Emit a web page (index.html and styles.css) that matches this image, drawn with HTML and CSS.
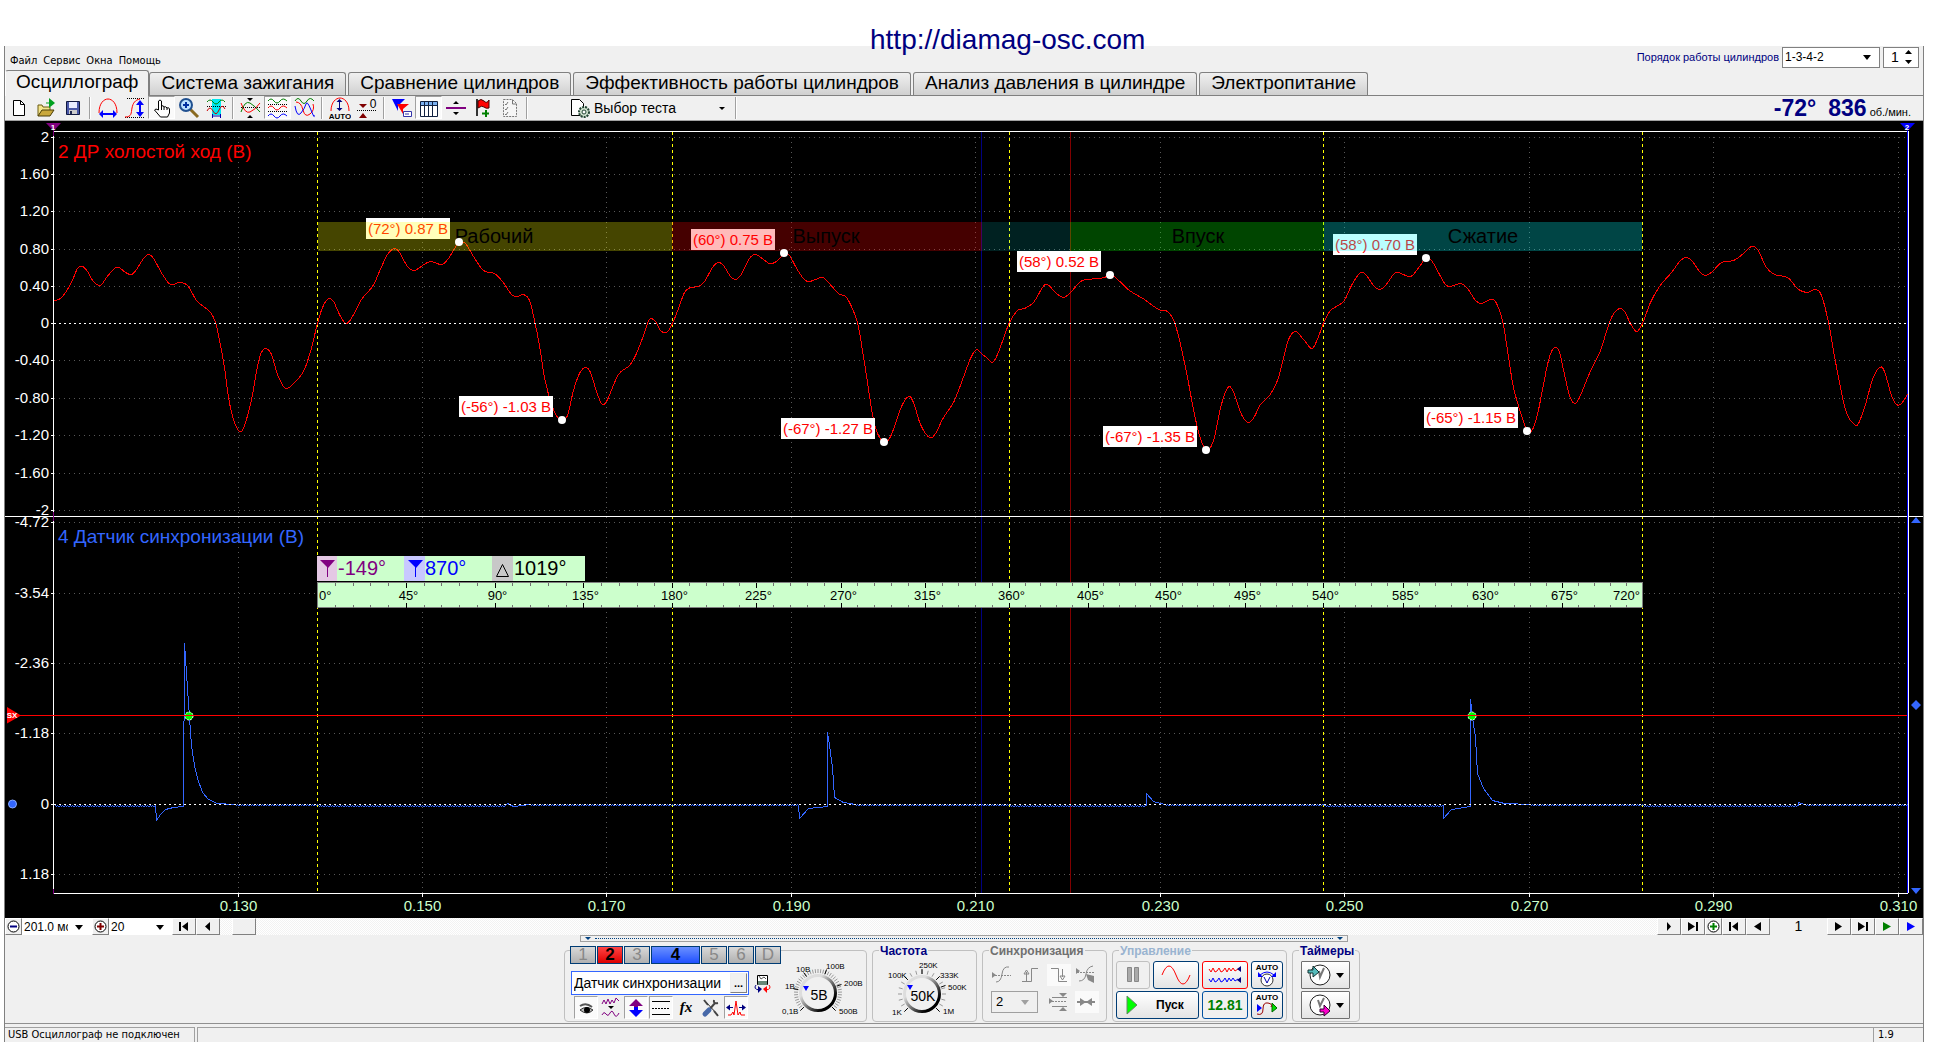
FILE: index.html
```html
<!DOCTYPE html>
<html lang="ru">
<head>
<meta charset="utf-8">
<title>Осциллограф</title>
<link rel="stylesheet" href="styles.css">
</head>
<body>
<a class="site" href="http://diamag-osc.com">http://diamag-osc.com</a>
<main class="app">
  <header class="menubar">
    <nav class="menus">
      <button>Файл</button><button>Сервис</button><button>Окна</button><button>Помощь</button>
    </nav>
    <div class="order">
      <label for="order">Порядок работы цилиндров</label>
      <span class="combo combo-order"><select id="order"><option>1-3-4-2</option></select></span>
      <span class="spin"><input type="text" value="1" aria-label="Цилиндр"><svg width="9" height="16"><path d="M1 5h7L4.500 1zM1 11h7l-3.500 4z"/></svg></span>
    </div>
  </header>

  <nav class="tabs">
    <button class="tab active">Осциллограф</button>
    <button class="tab">Система зажигания</button>
    <button class="tab">Сравнение цилиндров</button>
    <button class="tab">Эффективность работы цилиндров</button>
    <button class="tab">Анализ давления в цилиндре</button>
    <button class="tab">Электропитание</button>
  </nav>

  <div class="toolbar">
    <button class="tool" aria-label="Новый"><svg viewBox="0 0 22 22"><path d="M5.500 3.500h7l4 4v11h-11z" fill="#fff" stroke="#000"/><path d="M12.500 3.500v4h4" fill="none" stroke="#000"/></svg></button>
    <button class="tool" aria-label="Открыть"><svg viewBox="0 0 22 22"><path d="M3 19V8h4l1 2h7v3" fill="#f4e58c" stroke="#6b5a10"/><path d="M3 19l4-6h12l-4 6z" fill="#c9a83c" stroke="#4a3e08"/><path d="M14 1l6 5-6 5z" fill="#00a020"/><path d="M11 6h3" stroke="#00a020"/></svg></button>
    <button class="tool" aria-label="Сохранить"><svg viewBox="0 0 22 22"><path d="M4.500 4.500h13v13h-13z" fill="#4a58a8" stroke="#101840"/><path d="M7 5h8v6H7z" fill="#e8ecff"/><path d="M7 13h8v4H7z" fill="#ccc"/><path d="M8 14h2v3H8z" fill="#202850"/></svg></button>
    <i class="sep"></i>
    <button class="tool" aria-label="Период"><svg viewBox="0 0 22 22"><path d="M2 16C2 6 7 2 11 2s9 4 9 14" fill="none" stroke="red"/><path d="M4 17h14" stroke="#00f" stroke-width="2"/><path d="M2 17l4-4v8zM20 17l-4-4v8z" fill="#00f"/></svg></button>
    <button class="tool" aria-label="Амплитуда"><svg viewBox="0 0 22 22"><path d="M3 1.500h18M1 20.500h19" stroke="#000" stroke-dasharray="1 1"/><path d="M1 20c7 0 6-4 7-9s3-8 8-9" fill="none" stroke="red"/><path d="M16 6v11" stroke="#00f" stroke-width="2"/><path d="M16 3l4 5h-8zM16 20l4-5h-8z" fill="#00f"/></svg></button>
    <button class="tool on" aria-label="Рука"><svg viewBox="0 0 22 22"><path d="M7.500 13V4q1.500-2 3 0v5q2-1 2.500 1 2-1 3 1 2-1 2.500 1v4l-2 4h-7l-6-7q1-2 4 0zM10.500 9v4M13 10v3M16 11v2" fill="#fff" stroke="#000"/></svg></button>
    <button class="tool" aria-label="Масштаб"><svg viewBox="0 0 22 22"><path d="M12 12l8 8" stroke="#8a6a20" stroke-width="3"/><circle cx="8" cy="8" r="6" fill="#b8e0ff" stroke="#205090" stroke-width="2"/><path d="M5 8h6M8 5v6" stroke="#0030a0" stroke-width="2"/></svg></button>
    <button class="tool" aria-label="Окно"><svg viewBox="0 0 22 22"><path d="M7 2h9v16H7z" fill="#00e8f0"/><path d="M2 5q3-4 6 0t6 0 6 0" fill="none" stroke="green"/><path d="M2 9.500h19" stroke="#000" stroke-dasharray="1 1"/><path d="M2 14q3-6 6 0t6-1 6-1" fill="none" stroke="#c00"/><path d="M7 19h9M7.500 17v4M15.500 17v4" stroke="#00a"/></svg></button>
    <i class="sep"></i>
    <button class="tool" aria-label="Совместить"><svg viewBox="0 0 22 22"><path d="M1 15q4-12 9-9t10 9" fill="none" stroke="green"/><path d="M1 6q4 11 9 9t10-9" fill="none" stroke="red"/><path d="M1 10.500h20" stroke="#000" stroke-dasharray="1 1"/><path d="M7 1h6l-3 3zM7 21h6l-3-3z"/></svg></button>
    <button class="tool on" aria-label="Раздельно"><svg viewBox="0 0 22 22"><path d="M1 4q3-4 6 0t6 0 7 0" fill="none" stroke="green"/><path d="M1 11q3-4 6 0t6 0 7 0" fill="none" stroke="red"/><path d="M1 19q3-4 6 0t6 0 7 0" fill="none" stroke="#00f"/><path d="M1 7.500h20M1 14.500h20" stroke="#000" stroke-dasharray="1 1"/></svg></button>
    <button class="tool" aria-label="Наложить"><svg viewBox="0 0 22 22"><path d="M1 4q3-5 6 0t6 0 7 0" fill="none" stroke="green"/><path d="M2 5q5 0 7 8t7 4 3-10" fill="none" stroke="red"/><path d="M1 9q2 12 6 7t5-9 5 6 3 5" fill="none" stroke="#00f"/></svg></button>
    <i class="sep"></i>
    <button class="tool" aria-label="Авто"><svg viewBox="0 0 22 22"><path d="M2 14C2 5 7 1 11 1s9 4 9 13" fill="none" stroke="red"/><path d="M10.500 4v8" stroke="#000080"/><path d="M10.500 2l3 3h-6zM10.500 14l3-3h-6z" fill="#000080"/><text class="auto" x="11" y="22">AUTO</text></svg></button>
    <button class="tool" aria-label="Ноль"><svg viewBox="0 0 22 22"><path d="M3 7h8l-4 4zM3 21h8l-4-5z" fill="#800000"/><path d="M1 13.500h20" stroke="#000" stroke-dasharray="1 1"/><text class="zero" x="17" y="11">0</text></svg></button>
    <i class="sep"></i>
    <button class="tool" aria-label="Маркеры"><svg viewBox="0 0 22 22"><path d="M1 2h13L7 9v5z" fill="#00f"/><path d="M6 7h12l-6 5v5z" fill="red"/><path d="M12.500 14.500h8v5h-8z" fill="#fff" stroke="#33a"/><path d="M14 17h4" stroke="#33a"/></svg></button>
    <button class="tool on" aria-label="Таблица"><svg viewBox="0 0 22 22"><path d="M2.500 4.500h17v15h-17z" fill="#fff"/><path d="M3 5h16v4H3z" fill="#7ab0f0"/><path d="M2.500 4.500h17v15h-17zM2 8.500h18M6.500 4v15M10.500 4v15M14.500 4v15" stroke="#102040" fill="none"/></svg></button>
    <button class="tool" aria-label="Сечение"><svg viewBox="0 0 22 22"><path d="M1 11h20" stroke="#800080" stroke-width="2"/><path d="M8 7h6l-3-3zM8 15h6l-3 3z"/></svg></button>
    <button class="tool" aria-label="Флаг"><svg viewBox="0 0 22 22"><path d="M5 2v17" stroke="#333" stroke-width="2"/><path d="M6 4q3-3 6 0t5-1v8q-3 1-5-1t-6 1z" fill="red" stroke="#400"/><path d="M14 13v7M10 16.500h7" stroke="green" stroke-width="2"/></svg></button>
    <button class="tool" aria-label="Отчёт"><svg viewBox="0 0 22 22"><path d="M4.500 2.500h9l4 4v13h-13z" fill="#f6f6f6" stroke="#777" stroke-dasharray="2 1"/><path d="M13.500 3v4h4" fill="none" stroke="#777"/><path d="M6 7l1 1 2-3M6 12l1 1 2-3M6 17l1 1 2-3" fill="none" stroke="#777"/></svg></button>
    <i class="sep"></i>
    <button class="test"><svg width="20" height="20" viewBox="0 0 20 20"><path d="M1.500 1.500h8l4 4v12h-12z" fill="#fff" stroke="#000"/><circle cx="14" cy="14" r="5" fill="#cde0cd" stroke="#243" stroke-width="2" stroke-dasharray="2 1"/><circle cx="14" cy="14" r="2" fill="#fff" stroke="#243"/></svg><span>Выбор теста</span><svg class="arrow" width="6" height="4"><path d="M0 0h6L3 3z"/></svg></button>
    <i class="sep"></i>
    <output class="rpm"><b>-72°</b><b>836</b><span>об./мин.</span></output>
  </div>

  <svg class="scope" id="scope" viewBox="5 121 1918 797" role="img" aria-label="Осциллограмма"></svg>

  <div class="strip">
    <button class="cell narrow" aria-label="Уменьшить"><svg width="15" height="15"><circle cx="7.500" cy="7.500" r="5.500" fill="#fff" stroke="#000"/><path d="M4 7.500h7" stroke="#000080" stroke-width="2"/></svg></button>
    <span class="combo combo-time"><select aria-label="Развёртка"><option>201.0 мс</option></select></span>
    <button class="cell narrow" aria-label="Увеличить"><svg width="15" height="15"><circle cx="7.500" cy="7.500" r="5.500" fill="#fff" stroke="#000"/><path d="M4 7.500h7M7.500 4v7" stroke="#800000" stroke-width="2"/></svg></button>
    <span class="combo combo-step"><select aria-label="Шаг"><option>20</option></select></span>
    <button class="cell" aria-label="В начало"><svg width="12" height="9"><path d="M1 0h2v9H1zM10 0v9L4 4.500z"/></svg></button>
    <button class="cell" aria-label="Назад"><svg width="12" height="9"><path d="M8 0v9L3 4.500z"/></svg></button>
    <div class="track"><button class="cell thumb" aria-label="Положение"></button></div>
    <button class="cell" aria-label="Вперёд"><svg width="12" height="9"><path d="M4 0v9l4-4.500z"/></svg></button>
    <button class="cell" aria-label="В конец"><svg width="12" height="9"><path d="M9 0h2v9H9zM1 0v9l7-4.500z"/></svg></button>
    <button class="cell narrow" aria-label="Добавить"><svg width="15" height="15"><circle cx="7.500" cy="7.500" r="5.500" fill="#fff" stroke="#000"/><path d="M4 7.500h7M7.500 4v7" stroke="green" stroke-width="2"/></svg></button>
    <button class="cell" aria-label="Первый кадр"><svg width="12" height="9"><path d="M1 0h2v9H1zM10 0v9L4 4.500z"/></svg></button>
    <button class="cell" aria-label="Предыдущий кадр"><svg width="12" height="9"><path d="M9 0v9L2 4.500z"/></svg></button>
    <output class="frame">1</output>
    <button class="cell" aria-label="Следующий кадр"><svg width="12" height="9"><path d="M2 0v9l7-4.500z"/></svg></button>
    <button class="cell" aria-label="Последний кадр"><svg width="12" height="9"><path d="M9 0h2v9H9zM1 0v9l7-4.500z"/></svg></button>
    <button class="cell" aria-label="Воспроизвести"><svg width="12" height="9"><path d="M2 0v9l8-4.500z" fill="green"/></svg></button>
    <button class="cell" aria-label="Повторять"><svg width="12" height="9"><path d="M2 0v9l8-4.500z" fill="#00f"/></svg></button>
  </div>

  <div class="splitter"><i class="tri"></i><i class="dots"></i><i class="tri"></i></div>

  <div class="panels">
    <section class="group g-channel">
      <div class="chan-main">
        <div class="channels">
          <button>1</button><button class="red">2</button><button>3</button><button class="blue">4</button><button>5</button><button>6</button><button>D</button>
        </div>
        <div class="chan-name">
          <div class="namebox"><input type="text" value="Датчик синхронизации" aria-label="Имя канала"><button aria-label="Выбрать">...</button></div>
          <button class="plain" aria-label="Инверсия"><svg width="19" height="19" viewBox="0 0 19 19"><path d="M4.500 1.500h10v9h-10z" fill="#fff" stroke="#000"/><path d="M5 7h9v4H5z" fill="#687"/><path d="M6 2l2 3 3-2 2 2" fill="none" stroke="#555"/><path d="M3 11q-3 4 3 5" fill="none" stroke="#000080"/><path d="M5 12l4 3-4 4z" fill="#000080"/><path d="M16 11q3 4-3 5" fill="none" stroke="red"/><path d="M14 12l-4 3 4 4z" fill="red"/></svg></button>
        </div>
        <div class="chan-tools">
          <button class="tool on" aria-label="Видимость"><svg viewBox="0 0 22 22"><path d="M5 9q6-4 12 1" fill="none" stroke="#555" stroke-width="2"/><path d="M5 13q6-5 13 0-6 6-13 0" fill="#bbb" stroke="#333"/><circle cx="12" cy="13" r="3"/></svg></button>
          <button class="tool" aria-label="Фильтр"><svg viewBox="0 0 22 22"><path d="M2 7l2-4 2 4 2-5 2 5 2-4 2 3 2-5 3 3" fill="none" stroke="#800080"/><path d="M8 9h6l-3 3z"/><path d="M2 18q2-4 4-1t4-1 4 1 5-1" fill="none" stroke="#800080"/></svg></button>
          <button class="tool on" aria-label="Смещение"><svg viewBox="0 0 22 22"><path d="M11 2l7 7h-5v3H9V9H4z" fill="#800080"/><path d="M11 20l7-7h-5v-3H9v3H4z" fill="#00f"/></svg></button>
          <button class="tool on" aria-label="Линии"><svg viewBox="0 0 22 22"><path d="M2 4.500h18M2 17.500h18" stroke="#000"/><path d="M2 11.500h18" stroke="#000" stroke-dasharray="2 1"/></svg></button>
          <button class="tool" aria-label="Функция"><span class="fx">fx</span></button>
          <button class="tool" aria-label="Настройки"><svg viewBox="0 0 22 22"><path d="M5 4l13 14" stroke="#222"/><path d="M4 3l4 5M14 14l4 5" stroke="#444" stroke-width="2"/><path d="M14 3q-1 4 4 3M15 6l-6 7" fill="none" stroke="#444" stroke-width="2"/><path d="M9 13l-4 4" stroke="#4668a8" stroke-width="5" stroke-linecap="round"/></svg></button>
          <button class="tool on" aria-label="Импульс"><svg viewBox="0 0 22 22"><path d="M3 18h3l2-3 1 3 2-14 2 14 2-3 1 3h4" fill="none" stroke="red"/><path d="M3 10.500h5M14 10.500h5" stroke="#000080"/><path d="M1 10.500l4-3v6zM21 10.500l-4-3v6z" fill="#000080"/></svg></button>
        </div>
      </div>
      <svg class="knob" id="knob-volt" width="85" height="68" viewBox="780 952 85 68"></svg>
    </section>

    <section class="group g-freq">
      <h2>Частота</h2>
      <svg class="knob" id="knob-freq" width="97" height="60" viewBox="876 959 97 60"></svg>
    </section>

    <section class="group g-sync">
      <h2>Синхронизация</h2>
      <div class="sync-grid">
        <button class="plain" disabled aria-label="Уровень"><svg width="22" height="22"><path d="M1 8v6l4-3z" fill="#888"/><path d="M1 11.500h19" stroke="#888" stroke-dasharray="2 1"/><path d="M5 18q5 0 6-8t7-7" fill="none" stroke="#888"/></svg></button>
        <button class="plain" disabled aria-label="Фронт"><svg width="22" height="22"><path d="M3 17.500h9.500v-13H19M7.500 8v9M5 10l2.500-4 2.500 4z" fill="none" stroke="#888"/></svg></button>
        <button class="plain hatch" disabled aria-label="Спад"><svg width="22" height="22"><path d="M4 4.500h7.500v13H20M15.500 5v8M13 12l2.500 4 2.500-4z" fill="none" stroke="#888"/></svg></button>
        <button class="plain" disabled aria-label="Ручная"><svg width="22" height="22"><path d="M1 4v6l4-3z" fill="#888"/><path d="M2 8.500h18" stroke="#888" stroke-dasharray="2 1"/><path d="M4 17q6 0 7-7t7-8" fill="none" stroke="#888"/><path d="M11 10l8 2v7l-6-3z" fill="#888"/></svg></button>
        <span class="combo combo-sync"><select disabled aria-label="Канал синхронизации"><option>2</option></select></span>
        <button class="plain" disabled aria-label="Диапазон"><svg width="22" height="22"><path d="M2 7v6l4-3z" fill="#888"/><path d="M5 6.500h15M5 15.500h15" stroke="#888"/><path d="M5 10.500h15" stroke="#888" stroke-dasharray="2 1"/><path d="M12 2h8l-4 4zM12 20h8l-4-4z" fill="#888"/></svg></button>
        <button class="plain hatch" disabled aria-label="Центр"><svg width="22" height="22"><path d="M2 11h18" stroke="#888" stroke-width="2"/><path d="M5 7l6 4-6 4zM17 7l-6 4 6 4z" fill="#888"/></svg></button>
      </div>
    </section>

    <section class="group g-control">
      <h2>Управление</h2>
      <div class="ctrl-grid">
        <button class="key off" disabled aria-label="Пауза"><svg width="14" height="16"><path d="M1.500.5h4v14h-4zM8.500.5h4v14h-4z" fill="#aaa" stroke="#888"/></svg></button>
        <button class="key" aria-label="Синус"><svg width="30" height="20"><path d="M1 10Q8-8 15 10t14 0" fill="none" stroke="red"/></svg></button>
        <button class="key hot" aria-label="Сигналы"><svg width="34" height="20"><path d="M1 4l2 3 2-4 2 4 2-1 2-3 2 4 2-1 2-3 2 4 2-4 2 3 2-3 2 3 3-2" fill="none" stroke="red"/><path d="M1 14l2 3 2-4 2 4 2-1 2-3 2 4 2-1 2-3 2 4 2-4 2 3 2-3 2 3 3-2" fill="none" stroke="#00f"/><path d="M33 1v6l-4-3zM33 12v6l-4-3z" fill="#000080"/></svg></button>
        <button class="key" aria-label="Авто диапазон"><svg width="24" height="24"><text class="auto" x="12" y="7">AUTO</text><circle cx="12" cy="17" r="6" fill="#fff" stroke="#333"/><path d="M5 12q7-6 14 0" fill="none" stroke="#00f"/><path d="M3 9v5h5zM21 9v5h-5z" fill="#00f"/><path d="M9 14l3 6 3-6" fill="none" stroke="#00a"/></svg></button>
        <button class="key start"><svg width="12" height="20"><path d="M1 1l10 9-10 9z" fill="#0f0" stroke="#686" /></svg><span>Пуск</span></button>
        <output class="key volt">12.81</output>
        <button class="key" aria-label="Авто пуск"><svg width="24" height="24"><text class="auto" x="12" y="7">AUTO</text><path d="M2 11v8l5-4z" fill="#00f"/><path d="M17 10v9l5-4z" fill="#0d0" stroke="#060"/><path d="M2 21q6 2 6-5t5-6 3 4" fill="none" stroke="#900"/></svg></button>
      </div>
    </section>

    <section class="group g-timer">
      <h2>Таймеры</h2>
      <button class="key clock" aria-label="Таймер начала"><svg width="26" height="24" viewBox="0 0 26 24"><circle cx="14" cy="12" r="10" fill="#fff" stroke="#222"/><path d="M18 5l-4 9-1-6" fill="none" stroke="#777" stroke-width="2"/><path d="M2 7h5V3l6 6-6 5v-4H2z" fill="#5bb" stroke="#133"/></svg><svg class="arrow" width="8" height="5"><path d="M0 0h8L4 5z"/></svg></button>
      <button class="key clock" aria-label="Таймер окончания"><svg width="26" height="24" viewBox="0 0 26 24"><circle cx="14" cy="12" r="10" fill="#fff" stroke="#222"/><path d="M18 5l-4 8-2-6" fill="none" stroke="#777" stroke-width="2"/><path d="M14 16h4v-4l6 6-6 5v-4h-4z" fill="#f0c" stroke="#303"/></svg><svg class="arrow" width="8" height="5"><path d="M0 0h8L4 5z"/></svg></button>
    </section>
  </div>

  <footer class="status"><span class="usb">USB Осциллограф не подключен</span><span class="blank"></span><span class="version">1.9</span></footer>
</main>
<script src="scope.js"></script>
</body>
</html>
```
FILE: styles.css
```css
* { box-sizing: border-box; }
body { margin: 0; background: #fff; color: #000; font: 11px/14px "Liberation Sans", Arial, sans-serif; }
button, input, select, output { font: inherit; color: inherit; }
button { padding: 0; border: 0; background: none; }
svg { display: block; flex: none; }

.site { position: absolute; top: 24px; left: 870px; color: #000080; font-size: 28px; line-height: 32px; text-decoration: none; }
.app { margin: 46px 16px 5px 4px; background: #f0f0f0; border: solid #808080; border-width: 0 1px; }

.menubar { display: flex; justify-content: space-between; height: 24px; padding: 0 4px 0 5px; }
.menus { display: flex; align-items: center; gap: 6px; padding-top: 6px; font-family: "DejaVu Sans Condensed", "Liberation Sans", sans-serif; font-size: 11px; }
.order { display: flex; align-items: center; gap: 3px; padding-bottom: 2px; color: #000080; }
.combo { position: relative; display: inline-flex; background: #fff; color: #000; }
.combo::after { content: ""; position: absolute; right: 8px; top: 50%; margin-top: -2px; border: 4px solid transparent; border-top: 5px solid #000; border-bottom: 0; }
.combo select { appearance: none; width: 100%; border: 0; background: none; padding: 0 2px; opacity: 1; }
.combo-order { width: 98px; height: 21px; border: 1px solid #808080; font-size: 12px; }
.spin { display: flex; align-items: center; justify-content: space-between; width: 36px; height: 21px; padding: 0 5px; border: 1px solid #808080; background: #fff; color: #000; font-size: 14px; }
.spin input { width: 12px; border: 0; padding: 0 0 0 2px; background: none; }

.tabs { display: flex; align-items: flex-end; gap: 2px; height: 26px; border-bottom: 1px solid #808080; }
.tab { flex: none; height: 23px; padding: 0 11px 2px; border: 1px solid #808080; border-bottom: 0; border-radius: 3px 3px 0 0; background: linear-gradient(#f0f0f0, #d0d0d0); font-size: 19px; line-height: 20px; white-space: nowrap; }
.tab.active { height: 26px; margin: 0 -2px -1px 0; padding: 0 10px 3px; border-left-color: #fff; background: #f0f0f0; }

.toolbar { display: flex; align-items: center; height: 25px; padding: 0 12px 1px 0; border-bottom: 1px solid #a0a0a0; }
.tool { display: flex; flex: none; align-items: center; justify-content: center; width: 27px; height: 23px; }
.tool svg { width: 22px; height: 22px; }
.on { background: #fafafa; border: 1px solid #a0a0a0; border-right-color: #fff; border-bottom-color: #fff; }
.sep { flex: none; width: 2px; height: 22px; margin: 0 3px; border-left: 1px solid #a0a0a0; border-right: 1px solid #fff; }
.auto { font: bold 8px "Liberation Sans", sans-serif; text-anchor: middle; }
.zero { font: 12px "Liberation Sans", sans-serif; text-anchor: middle; }
.test { display: flex; align-items: center; gap: 4px; width: 162px; margin-left: 39px; font-size: 14px; text-align: left; }
.test .arrow { margin: 2px 7px 0 auto; }
.rpm { display: flex; align-items: baseline; margin-left: auto; color: #000080; }
.rpm b { margin-right: 12px; font-size: 23px; line-height: 22px; }
.rpm b + b { margin-right: 3px; }
.rpm span { color: #000; font-size: 11px; }

.scope { width: 100%; height: auto; background: #000; font-family: "Liberation Sans", Arial, sans-serif; }
.crisp { shape-rendering: crispEdges; }
.grid { stroke: #585858; stroke-dasharray: 1 4; }
.zero-line { stroke: #fff; stroke-dasharray: 2 3; }
.cycle { stroke: #ff0; stroke-dasharray: 3 3; }
.axis { stroke: #fff; }
.lab { font-size: 15px; fill: #fff; }
.lab-x { fill: #cfc; text-anchor: middle; }
.end { text-anchor: end; }
.mid { text-anchor: middle; }
.title { font-size: 19px; }
.callout { font-size: 15px; fill: #f00; }
.phase { font-size: 20px; text-anchor: middle; }
.read { font-size: 20px; }
.deg { font-size: 13px; }
.trace { fill: none; stroke: #f00; shape-rendering: crispEdges; }
.trace.sync { stroke: #36f; }
.tiny { font: bold 8px "Liberation Sans", sans-serif; fill: #fff; text-anchor: middle; }

.strip { display: flex; height: 17px; }
.cell { display: flex; flex: none; align-items: center; justify-content: center; width: 24px; height: 17px; border: 1px solid #fff; border-right-color: #808080; border-bottom-color: #808080; background: #f0f0f0; }
.narrow { width: 17px; }
.combo-time { width: 70px; font-size: 12px; overflow: hidden; }
.combo-step { width: 63px; font-size: 12px; }
.combo-time::after { right: 9px; }
.combo-time select { padding-right: 24px; }
.track { flex: 1; padding-left: 12px; background: repeating-conic-gradient(#fff 0 25%, #f2f2f2 0 50%) 0 0 / 2px 2px; }
.frame { width: 57px; font-size: 14px; line-height: 17px; text-align: center; }

.splitter { display: flex; align-items: center; width: 40%; height: 7px; margin: 0 auto; padding: 0 4px; border: 1px solid #a0a0a0; }
.dots { flex: 1; margin: 0 4px; border-top: 1px dotted #004080; }
.tri { border: 3px solid transparent; border-top: 3px solid #004080; border-bottom: 0; }

.panels { display: flex; justify-content: center; gap: 5px; padding: 8px 4px 1px 0; }
.group { height: 72px; border: 1px solid #c0c0c0; border-radius: 4px; }
.group h2 { width: max-content; margin: -7px 0 3px 6px; padding: 0 1px; background: #f0f0f0; color: #000080; font-size: 12px; line-height: 14px; }
.g-channel { display: flex; width: 303px; padding-left: 5px; }
.chan-main { width: 210px; }
.channels { display: flex; gap: 1px; width: 211px; height: 18px; margin: -5px 0 7px; background: #f0f0f0; }
.channels button { width: 26px; border: 1px solid #003c74; background: linear-gradient(#d8d8d8, #b0b0b0); color: #888; font-size: 17px; line-height: 16px; }
.channels .red { background: linear-gradient(#f44, #d00); color: #000; font-weight: bold; }
.channels .blue { width: 49px; background: linear-gradient(#6a90ff, #2050ff); color: #000; font-weight: bold; }
.chan-name { display: flex; align-items: center; gap: 4px; height: 24px; }
.namebox { display: flex; width: 178px; height: 24px; margin-left: 1px; padding: 1px; border: 1px solid #36f; background: #fff; }
.namebox input { flex: 1; min-width: 0; border: 0; padding: 0 1px; background: none; font-size: 14px; }
.namebox button { width: 17px; border: 1px solid #eee; border-right-color: #808080; border-bottom-color: #808080; background: #f0f0f0; font-weight: bold; }
.chan-tools { display: flex; gap: 1px; padding: 1px 0 0 4px; }
.chan-tools .tool { width: 24px; height: 23px; }
.fx { font: italic bold 15px "Liberation Serif", serif; }
.knob { font-family: "Liberation Sans", Arial, sans-serif; }
.knob-label { font-size: 8px; }
.knob-value { font-size: 14px; text-anchor: middle; }
.g-freq { width: 105px; padding: 0 3px; }
.g-freq h2 { margin-bottom: 1px; margin-left: 3px; }
.g-sync { width: 125px; }
.g-sync h2 { color: #707070; }
.sync-grid { display: grid; grid-template-columns: repeat(4, 24px); gap: 5px 4px; padding: 3px 0 0 8px; }
.hatch { background: #fafafa; }
.combo-sync { grid-column: span 2; width: 47px; height: 22px; border: 1px solid #a0a0a0; background: none; font-size: 13px; }
.combo-sync::after { border-top-color: #a0a0a0; }
.combo-sync select { padding-left: 4px; color: #000; }
.g-control { width: 175px; }
.g-control h2 { color: #9ab4d0; }
.ctrl-grid { display: grid; grid-template-columns: 34px 46px 46px 32px; gap: 2px 3px; padding-left: 3px; }
.key { display: flex; align-items: center; justify-content: center; height: 28px; border: 1px solid #003c74; border-radius: 3px; background: linear-gradient(#fff, #e4e4e4); }
.off { border-color: #c0c0c0; background: #f0f0f0; }
.hot { border-color: #f00; }
.start { grid-column: span 2; justify-content: flex-start; gap: 18px; padding-left: 9px; font-size: 12px; font-weight: bold; }
.volt { border-color: #0050a0; background: #f0f0f0; color: green; font-size: 14px; font-weight: bold; }
.g-timer { width: 68px; }
.clock { justify-content: flex-start; gap: 4px; width: 49px; margin: 0 0 2px 8px; padding-left: 4px; border-color: #707070; border-radius: 1px; }

.status { display: flex; height: 19px; padding-top: 3px; border-top: 1px solid #909090; font-family: "DejaVu Sans Condensed", "Liberation Sans", sans-serif; font-size: 11px; line-height: 14px; }
.status span { border-top: 1px solid #a0a0a0; border-right: 1px solid #a0a0a0; }
.usb { width: 190px; padding-left: 3px; white-space: nowrap; }
.status .blank { flex: 1; margin-left: 2px; border-left: 1px solid #a0a0a0; }
.status .version { width: 49px; padding-left: 4px; border-right: 0; }
```
FILE: scope.js
```js
const out = [];
const line = (x1, y1, x2, y2, cls, extra = '') =>
  out.push(`<line class="crisp ${cls}" x1="${x1}" y1="${y1}" x2="${x2}" y2="${y2}" ${extra}/>`);
const text = (x, y, s, cls, fill) =>
  out.push(`<text class="${cls}" x="${x}" y="${y}"${fill ? ` fill="${fill}"` : ''}>${s}</text>`);
const rect = (x, y, w, h, fill, extra = '') =>
  out.push(`<rect class="crisp" x="${x}" y="${y}" width="${w}" height="${h}" fill="${fill}" ${extra}/>`);

// Grid and axes
const upper = [['2', 137], ['1.60', 174], ['1.20', 211], ['0.80', 249], ['0.40', 286], ['0', 323],
  ['-0.40', 360], ['-0.80', 398], ['-1.20', 435], ['-1.60', 473], ['-2', 510]];
const lower = [['-4.72', 522], ['-3.54', 593], ['-2.36', 663], ['-1.18', 733], ['0', 804], ['1.18', 874]];
[...upper, ...lower].forEach(([label, y]) => {
  line(54, y + .5, 1907, y + .5, 'grid');
  line(51, y + .5, 54, y + .5, 'axis');
  text(49, y + 5, label, 'lab end');
});
['0.130', '0.150', '0.170', '0.190', '0.210', '0.230', '0.250', '0.270', '0.290', '0.310'].forEach((label, i) => {
  const x = Math.floor(238 + i * 184.45) + .5;
  line(x, 137, x, 893, 'grid');
  line(x, 893, x, 897, 'axis');
  text(x, 911, label, 'lab lab-x');
});
line(981.5, 132, 981.5, 893, '', 'stroke="#000080"');
line(1070.5, 132, 1070.5, 893, '', 'stroke="#800000"');
const cycles = [317.5, 672.5, 1009.5, 1323.5, 1642.5];
cycles.forEach(x => line(x, 132, x, 893, 'cycle'));
line(53, 131.5, 1908, 131.5, 'axis');
line(5, 516.5, 1923, 516.5, 'axis');
line(53, 893.5, 1908, 893.5, 'axis');
line(53.5, 131, 53.5, 893, 'axis');
line(1908.5, 131, 1908.5, 893, 'axis');
line(1907.5, 131, 1907.5, 893, '', 'stroke="#00f"');
text(58, 158, '2 ДР холостой ход (В)', 'title', '#f00');
text(58, 543, '4 Датчик синхронизации (В)', 'title', '#36f');

// Channel 2 samples: x, y pairs
const ch2 = [54,300,60,298,67,289,74,275,77,268,82,266,87,271,93,281,100,285,106,277,115,267,120,268,125,272,131,274,136,269,143,258,148,254,153,258,162,274,170,284,179,282,187,285,196,300,203,306,210,312,215,322,219,340,224,367,228,397,233,419,239,431,244,425,251,399,256,371,260,354,265,348,271,354,277,374,285,388,294,382,303,371,310,351,317,323,322,307,328,298,333,301,340,316,346,323,352,316,361,299,372,286,379,271,387,254,394,248,399,252,407,266,414,270,422,265,430,261,441,264,448,258,454,248,459,242,465,243,473,256,483,270,494,273,502,281,511,294,517,296,523,294,529,300,534,320,539,345,544,377,551,404,557,417,562,420,567,415,573,390,579,373,585,367,590,372,597,394,602,404,607,399,618,374,629,365,636,353,643,335,649,319,655,321,660,330,666,332,672,323,678,308,684,292,690,287,698,286,704,281,712,267,718,262,723,265,730,276,735,279,740,275,749,258,755,254,763,259,769,263,776,261,784,253,789,255,798,271,807,281,821,277,827,281,838,293,845,296,850,304,857,322,862,350,867,382,872,414,877,433,884,442,889,438,894,426,901,406,908,396,913,402,920,424,929,437,935,433,943,417,953,402,961,382,970,358,976,349,981,353,987,358,992,362,997,354,1004,335,1009,322,1017,310,1024,308,1033,302,1042,287,1047,284,1055,292,1063,297,1071,291,1082,280,1100,278,1110,275,1115,277,1129,290,1144,299,1158,309,1167,311,1174,322,1180,344,1187,377,1193,409,1199,435,1206,450,1213,440,1219,412,1224,394,1229,386,1234,394,1241,414,1248,422,1254,416,1260,404,1269,395,1277,380,1283,358,1288,339,1295,331,1303,339,1311,348,1316,341,1323,323,1330,310,1343,301,1351,285,1360,272,1366,275,1373,285,1379,289,1385,285,1393,274,1398,272,1410,276,1419,266,1425,258,1431,260,1439,274,1445,284,1450,286,1460,283,1467,288,1475,300,1481,303,1490,299,1495,301,1502,320,1507,350,1513,387,1521,415,1527,431,1532,429,1537,414,1543,384,1547,364,1551,351,1555,347,1559,352,1564,374,1569,395,1574,403,1579,397,1589,373,1600,350,1606,331,1612,315,1619,308,1624,311,1630,323,1636,331,1642,323,1650,302,1659,286,1671,272,1680,260,1686,257,1692,261,1699,271,1705,275,1712,271,1721,262,1733,260,1743,253,1751,246,1757,249,1766,267,1774,274,1787,277,1797,288,1806,292,1815,289,1821,295,1828,322,1834,356,1842,397,1847,415,1854,424,1858,423,1865,404,1872,379,1879,367,1884,371,1891,395,1896,404,1901,403,1907,394];
const pts = [];
for (let i = 0; i < ch2.length; i += 2) pts.push([ch2[i] + .5, ch2[i + 1] + .5]);
let d = `M${pts[0]}`;
for (let i = 0; i < pts.length - 1; i++) {
  const a = pts[Math.max(i - 1, 0)], b = pts[i], c = pts[i + 1], e = pts[Math.min(i + 2, pts.length - 1)];
  d += `C${b[0] + (c[0] - a[0]) / 6},${b[1] + (c[1] - a[1]) / 6} ${c[0] - (e[0] - b[0]) / 6},${c[1] - (e[1] - b[1]) / 6} ${c}`;
}
out.push(`<path class="trace" d="${d}"/>`);
line(54, 323.5, 1907, 323.5, 'zero-line');

// Channel 4: quiet, slightly noisy baseline with synchronisation pulses
const ch4 = [54,805,155,805,156,820,160,814,165,809,173,807,183,806,184,643,187,688,189,717,191,745,194,765,197,778,202,792,208,799,217,803,234,804,317,804,318,805,505,805,507,803,513,806,530,804,672,804,798,805,799,818,808,808,827,806,827,732,829,745,832,767,834,797,843,802,855,804,1009,804,1010,805,1146,805,1146,793,1153,801,1164,804,1323,804,1324,805,1443,805,1443,818,1451,809,1470,806,1470,699,1472,717,1475,737,1477,773,1483,788,1492,800,1504,803,1530,804,1642,804,1643,805,1798,805,1798,802,1804,804,1907,804];
const pulse = [];
for (let i = 0; i < ch4.length; i += 2) {
  pulse.push(`${ch4[i] + .5},${ch4[i + 1] + .5}`);
  if (ch4[i + 2] - ch4[i] > 30) {
    for (let x = ch4[i] + 1; x < ch4[i + 2]; x++) pulse.push(`${x + .5},${ch4[i + 1] + .5 + (x * x * 7 + x) % 5 % 2}`);
  }
}
out.push(`<polyline class="trace sync" points="${pulse.join(' ')}"/>`);
line(54, 804.5, 1907, 804.5, 'zero-line');

// Trigger level
[189, 1472].forEach(x => out.push(`<circle cx="${x}" cy="716" r="4" fill="#0f0" stroke="#fff" stroke-dasharray="2 1"/>`));
line(8, 715.5, 1907, 715.5, '', 'stroke="#f00"');
out.push('<path d="M7 707l14 8.500-14 8z" fill="#f00"/>');
text(12, 718, 'SX', 'tiny');
out.push('<circle cx="12.500" cy="804" r="4" fill="#36f" stroke="#8af"/>');
out.push('<path d="M1911 523h10l-5-6zM1911 888h10l-5 6zM1916 700l5 5-5 5-5-5z" fill="#36f"/>');

// Time markers
out.push('<path d="M46 123h15l-7.500 8z" fill="#800080"/><path d="M1900 123h15l-7.500 8z" fill="#00f"/>');
line(53.5, 131, 53.5, 136, '', 'stroke="#800080"');
line(53.5, 512, 53.5, 521, '', 'stroke="#800080"');
line(53.5, 889, 53.5, 894, '', 'stroke="#800080"');
text(53, 130, '1', 'tiny');
text(1907, 130, '2', 'tiny');

// Extremum callouts
[[366, 218, 84, '(72°) 0.87 В'], [691, 229, 84, '(60°) 0.75 В'], [1017, 251, 84, '(58°) 0.52 В'], [1333, 234, 84, '(58°) 0.70 В'],
  [459, 396, 94, '(-56°) -1.03 В'], [781, 418, 94, '(-67°) -1.27 В'], [1103, 426, 94, '(-67°) -1.35 В'], [1424, 407, 94, '(-65°) -1.15 В']
].forEach(([x, y, w, s]) => { rect(x, y, w, 21, '#fff'); text(x + w / 2, y + 16, s, 'callout mid'); });

// Engine strokes
[[318, 672, '#ff0', .27], [672, 982, '#f00', .27], [982, 1070, '#0ff', .13], [1070, 1324, '#0f0', .27], [1324, 1642, '#0ff', .27]]
  .forEach(([a, b, fill, o]) => rect(a, 222, b - a, 29, fill, `opacity="${o}"`));
[[494, 'Рабочий'], [826, 'Выпуск'], [1198, 'Впуск'], [1483, 'Сжатие']].forEach(([x, s]) => text(x, 243, s, 'phase'));
[[459, 242], [562, 420], [784, 253], [884, 442], [1110, 275], [1206, 450], [1426, 258], [1527, 431]]
  .forEach(([x, y]) => out.push(`<circle cx="${x}" cy="${y}" r="4" fill="#fff"/>`));

// Angle readouts
rect(317, 556, 268, 25, '#cfc');
rect(317, 556, 20, 25, '#e4c8e4');
rect(404, 556, 21, 25, '#c8c8ff');
rect(492, 556, 21, 25, '#c8c8c8');
out.push('<path d="M320 560h15l-7 8zM327 567h1v10h-1z" fill="#800080"/><path d="M408 560h15l-7 8zM415 567h1v10h-1z" fill="#00f"/><path d="M496.500 576.500h12l-6-12z" fill="none" stroke="#000"/>');
text(338, 575, '-149°', 'read', '#800080');
text(425, 575, '870°', 'read', '#00f');
text(514, 575, '1019°', 'read', '#000');

// Angle ruler
rect(317, 582, 1326, 26, '#cfc');
out.push('<path class="crisp" d="M317.500 582.500h1325v25h-1325z" fill="none" stroke="#808080"/>');
for (let n = 1; n < 80; n++) {
  const seg = Math.floor(n / 20), x = Math.round(cycles[seg] + (cycles[seg + 1] - cycles[seg]) * (n % 20) / 20 - .5) + .5;
  const major = n % 5 === 0, len = major ? 5 : 3, stroke = `stroke="${major ? '#000' : '#707070'}"`;
  line(x, 583, x, 583 + len, '', stroke);
  line(x, 608 - len, x, 608, '', stroke);
  if (major) text(x + 2, 600, n * 9 + '°', 'deg mid');
}
text(319, 600, '0°', 'deg');
text(1640, 600, '720°', 'deg end');
document.getElementById('scope').innerHTML = out.join('');

// Rotary knobs
function knob(id, cx, cy, value, labels, ticks, pointer) {
  const k = [`<defs><linearGradient id="${id}-g" x1="0" y1="0" x2="1" y2="1"><stop offset=".3" stop-color="#ddd"/><stop offset=".8" stop-color="#000"/></linearGradient></defs>`];
  for (let i = 0; i <= ticks; i++) {
    const a = (135 + 270 * i / ticks) * Math.PI / 180, c = Math.cos(a), s = Math.sin(a);
    k.push(`<line x1="${cx + 20 * c}" y1="${cy + 20 * s}" x2="${cx + 24 * c}" y2="${cy + 24 * s}" stroke="#999"/>`);
  }
  labels.forEach(([x, y, s, deg]) => {
    const a = deg * Math.PI / 180, c = Math.cos(a), n = Math.sin(a);
    k.push(`<line x1="${cx + 20 * c}" y1="${cy + 20 * n}" x2="${cx + 25 * c}" y2="${cy + 25 * n}" stroke="#000"/><text class="knob-label" x="${x}" y="${y}">${s}</text>`);
  });
  k.push(`<circle cx="${cx}" cy="${cy}" r="17.500" fill="#f0f0f0" stroke="url(#${id}-g)" stroke-width="3"/>`);
  k.push(`<path d="M${pointer[0] - 3} ${pointer[1] - 2}h6l-3 5z" fill="#00f"/><text class="knob-value" x="${cx + 1}" y="${cy + 7}">${value}</text>`);
  document.getElementById(id).innerHTML = k.join('');
}
knob('knob-volt', 818, 994, '5В', [[782, 1015, '0,1В', 135], [785, 990, '1В', 190], [796, 973, '10В', 235], [826, 970, '100В', 290], [844, 987, '200В', 340], [839, 1015, '500В', 45]], 40, [806, 989]);
knob('knob-freq', 922, 994, '50K', [[892, 1015, '1K', 135], [888, 978, '100K', 225], [919, 968, '250K', 270], [940, 978, '333K', 315], [948, 990, '500K', 340], [943, 1014, '1M', 45]], 18, [910, 987]);
```
